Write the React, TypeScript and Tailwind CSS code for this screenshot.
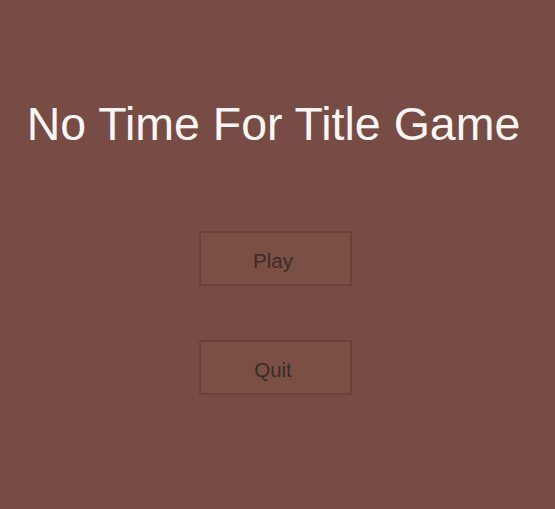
export default function App() {
  return (
    <div
      className="w-[555px] h-[509px] bg-[#764c45] flex flex-col items-center"
      style={{ fontFamily: '"Liberation Sans", Arial, sans-serif' }}
    >
      <h1 className="mt-[95px] text-[46.5px] leading-[58px] text-[#fbf6f3] pr-[8px]">
        No Time For Title Game
      </h1>
      <div className="mt-[78px] flex flex-col gap-[54px] pr-[4px]">
        <button className="w-[153px] h-[55px] bg-[#7a5044] border-2 border-[#6b4239] pt-[5px] pr-[5px] text-[20.5px] text-[#3b2b26]">
          Play
        </button>
        <button className="w-[153px] h-[55px] bg-[#7a5044] border-2 border-[#6b4239] pt-[5px] pr-[5px] text-[20.5px] text-[#3b2b26]">
          Quit
        </button>
      </div>
    </div>
  );
}
